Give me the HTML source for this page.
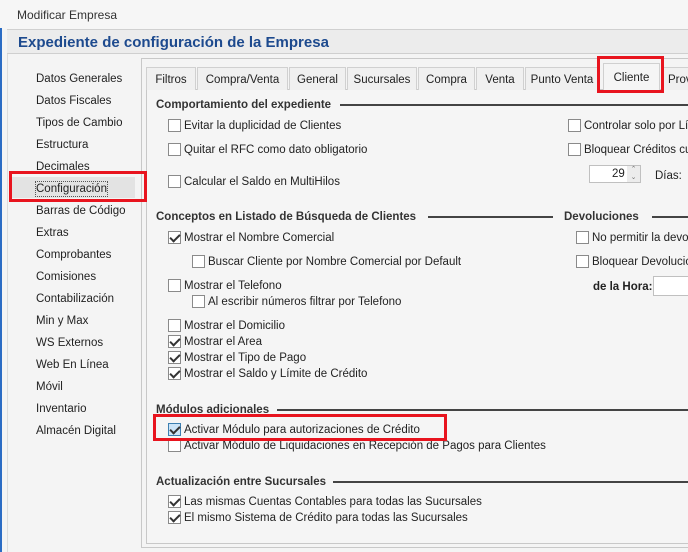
<!DOCTYPE html>
<html><head><meta charset="utf-8"><style>
*{margin:0;padding:0;box-sizing:border-box}
body{width:688px;height:552px;overflow:hidden;background:#f4f4f4;font-family:"Liberation Sans",sans-serif;font-size:11.5px;color:#222;position:relative}
.a{position:absolute;white-space:nowrap}
.t{line-height:14px;margin-top:1px}
.cb{position:absolute;width:13px;height:13px;border:1px solid #8a8a8a;background:#fff}
.cb.c::after{content:"";position:absolute;left:3px;top:0px;width:4px;height:8px;border:solid #333;border-width:0 2px 2px 0;transform:rotate(45deg)}
.cb.h{background:#cce4f7;border-color:#3c7fb1}
.sec{font-weight:bold;color:#333}
.ln{position:absolute;height:2px;background:#444}
.tab{position:absolute;top:67px;height:23px;border:1px solid #d0d0d0;border-bottom:none;background:#f0f0f0;text-align:center;line-height:24px;font-size:11.5px}
.nav{position:absolute;left:36px;line-height:14px;margin-top:1px}
.red{position:absolute;border:3px solid #e8141e}
</style></head><body>
<div class="a" style="left:0;top:0;width:688px;height:29px;background:#f6f6f6"></div>
<div class="a t" style="left:17px;top:7px;font-size:12px;color:#333">Modificar Empresa</div>
<div class="a" style="left:0;top:28px;width:2px;height:524px;background:#2b6cc4"></div>
<div class="a" style="left:7px;top:29px;width:681px;height:25px;background:#ececec;border-top:1px solid #d0d0d0;border-bottom:1px solid #cfcfcf"></div>
<div class="a" style="left:18px;top:34px;font-size:15px;font-weight:bold;color:#1d4a8e">Expediente de configuración de la Empresa</div>
<div class="a" style="left:7px;top:54px;width:1px;height:498px;background:#dcdcdc"></div>

<div class="a" style="left:12px;top:177px;width:123px;height:21px;background:#e3e3e3"></div>
<div class="nav" style="top:71px">Datos Generales</div>
<div class="nav" style="top:93px">Datos Fiscales</div>
<div class="nav" style="top:115px">Tipos de Cambio</div>
<div class="nav" style="top:137px">Estructura</div>
<div class="nav" style="top:159px">Decimales</div>
<div class="nav" style="top:181px;outline:1px dotted #555">Configuración</div>
<div class="nav" style="top:203px">Barras de Código</div>
<div class="nav" style="top:225px">Extras</div>
<div class="nav" style="top:247px">Comprobantes</div>
<div class="nav" style="top:269px">Comisiones</div>
<div class="nav" style="top:291px">Contabilización</div>
<div class="nav" style="top:313px">Min y Max</div>
<div class="nav" style="top:335px">WS Externos</div>
<div class="nav" style="top:357px">Web En Línea</div>
<div class="nav" style="top:379px">Móvil</div>
<div class="nav" style="top:401px">Inventario</div>
<div class="nav" style="top:423px">Almacén Digital</div>

<div class="a" style="left:141px;top:58px;width:560px;height:490px;border:1px solid #c8c8c8"></div>
<div class="a" style="left:146px;top:89px;width:550px;height:455px;border:1px solid #c8c8c8;background:#f5f5f5"></div>
<div class="tab" style="left:146px;width:50px">Filtros</div>
<div class="tab" style="left:197px;width:91px">Compra/Venta</div>
<div class="tab" style="left:289px;width:57px">General</div>
<div class="tab" style="left:347px;width:70px">Sucursales</div>
<div class="tab" style="left:418px;width:57px">Compra</div>
<div class="tab" style="left:476px;width:48px">Venta</div>
<div class="tab" style="left:525px;width:74px">Punto Venta</div>
<div class="tab" style="left:603px;top:63px;height:28px;width:57px;background:#f5f5f5;line-height:28px">Cliente</div>
<div class="tab" style="left:661px;width:40px;text-align:left;padding-left:6px">Prov</div>

<div class="a t sec" style="left:156px;top:97px">Comportamiento del expediente</div>
<div class="ln" style="left:340px;top:104px;width:348px"></div>
<div class="cb" style="left:168px;top:119px"></div><div class="a t" style="left:184px;top:118px">Evitar la duplicidad de Clientes</div>
<div class="cb" style="left:168px;top:143px"></div><div class="a t" style="left:184px;top:142px">Quitar el RFC como dato obligatorio</div>
<div class="cb" style="left:168px;top:175px"></div><div class="a t" style="left:184px;top:174px">Calcular el Saldo en MultiHilos</div>
<div class="cb" style="left:568px;top:119px"></div><div class="a t" style="left:584px;top:118px">Controlar solo por Lí</div>
<div class="cb" style="left:568px;top:143px"></div><div class="a t" style="left:584px;top:142px">Bloquear Créditos cu</div>
<div class="a" style="left:589px;top:165px;width:52px;height:18px;border:1px solid #c0c0c0;background:#fff"></div>
<div class="a t" style="left:612px;top:166px">29</div>
<div class="a" style="left:627px;top:166px;width:13px;height:16px;background:#ececec;font-size:7px;line-height:8px;color:#777;text-align:center">⌃<br>⌄</div>
<div class="a t" style="left:655px;top:168px">Días:</div>

<div class="a t sec" style="left:156px;top:209px">Conceptos en Listado de Búsqueda de Clientes</div>
<div class="ln" style="left:428px;top:216px;width:125px"></div>
<div class="a t sec" style="left:564px;top:209px">Devoluciones</div>
<div class="ln" style="left:652px;top:216px;width:36px"></div>
<div class="cb c" style="left:168px;top:231px"></div><div class="a t" style="left:184px;top:230px">Mostrar el Nombre Comercial</div>
<div class="cb" style="left:192px;top:255px"></div><div class="a t" style="left:208px;top:254px">Buscar Cliente por Nombre Comercial por Default</div>
<div class="cb" style="left:168px;top:279px"></div><div class="a t" style="left:184px;top:278px">Mostrar el Telefono</div>
<div class="cb" style="left:192px;top:295px"></div><div class="a t" style="left:208px;top:294px">Al escribir números filtrar por Telefono</div>
<div class="cb" style="left:168px;top:319px"></div><div class="a t" style="left:184px;top:318px">Mostrar el Domicilio</div>
<div class="cb c" style="left:168px;top:335px"></div><div class="a t" style="left:184px;top:334px">Mostrar el Area</div>
<div class="cb c" style="left:168px;top:351px"></div><div class="a t" style="left:184px;top:350px">Mostrar el Tipo de Pago</div>
<div class="cb c" style="left:168px;top:367px"></div><div class="a t" style="left:184px;top:366px">Mostrar el Saldo y Límite de Crédito</div>
<div class="cb" style="left:576px;top:231px"></div><div class="a t" style="left:592px;top:230px">No permitir la devo</div>
<div class="cb" style="left:576px;top:255px"></div><div class="a t" style="left:592px;top:254px">Bloquear Devolucio</div>
<div class="a t sec" style="left:593px;top:279px;color:#222">de la Hora:</div>
<div class="a" style="left:653px;top:276px;width:40px;height:20px;border:1px solid #c0c0c0;background:#fff"></div>

<div class="a t sec" style="left:156px;top:402px">Módulos adicionales</div>
<div class="ln" style="left:277px;top:409px;width:411px"></div>
<div class="cb c h" style="left:168px;top:423px"></div><div class="a t" style="left:184px;top:422px">Activar Módulo para autorizaciones de Crédito</div>
<div class="cb" style="left:168px;top:439px"></div><div class="a t" style="left:184px;top:438px">Activar Módulo de Liquidaciones en Recepción de Pagos para Clientes</div>

<div class="a t sec" style="left:156px;top:474px">Actualización entre Sucursales</div>
<div class="ln" style="left:333px;top:481px;width:355px"></div>
<div class="cb c" style="left:168px;top:495px"></div><div class="a t" style="left:184px;top:494px">Las mismas Cuentas Contables para todas las Sucursales</div>
<div class="cb c" style="left:168px;top:511px"></div><div class="a t" style="left:184px;top:510px">El mismo Sistema de Crédito para todas las Sucursales</div>

<div class="red" style="left:9px;top:171px;width:138px;height:31px"></div>
<div class="red" style="left:597px;top:56px;width:67px;height:37px"></div>
<div class="red" style="left:153px;top:414px;width:294px;height:27px"></div>
</body></html>
